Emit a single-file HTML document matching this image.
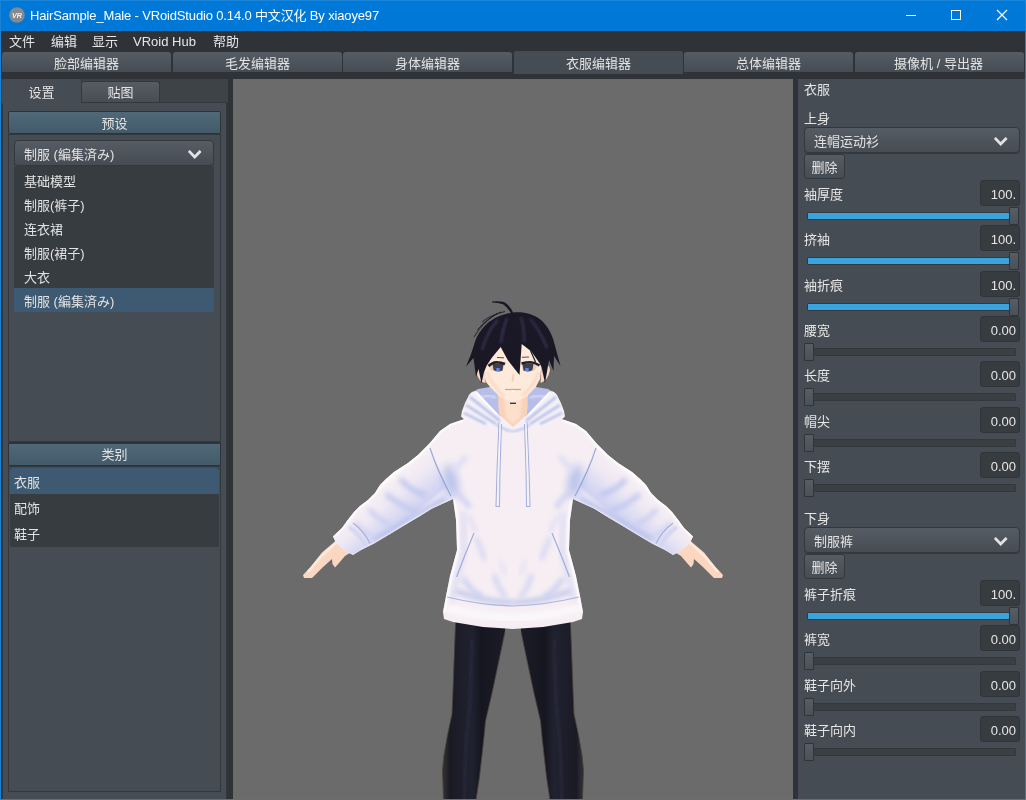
<!DOCTYPE html>
<html lang="zh">
<head>
<meta charset="utf-8">
<title>HairSample_Male - VRoidStudio 0.14.0 中文汉化 By xiaoye97</title>
<style>
*{box-sizing:border-box;margin:0;padding:0}
html,body{width:1026px;height:800px;overflow:hidden;background:#2f3337}
body{position:relative;font-family:"Liberation Sans","Noto Sans CJK SC",sans-serif;font-size:13px;color:#e3e3e3;line-height:1}
.abs{position:absolute}
#win{position:absolute;left:0;top:0;width:1026px;height:800px;overflow:hidden;will-change:transform;-webkit-font-smoothing:antialiased}
#bl,#br,#bb,#bt{position:absolute;background:#1883d7;z-index:50}
#bt{left:0;top:0;width:1026px;height:1px;background:#1a85d9}
#bl{left:0;top:0;width:1px;height:800px}
#br{left:1025px;top:0;width:1px;height:800px}
#bb{left:0;top:799px;width:1026px;height:1px}
#title{position:absolute;left:0;top:0;width:1026px;height:31px;background:#0078d7;color:#fff}
#title .t{position:absolute;left:30px;top:9px;font-size:13px;white-space:nowrap;letter-spacing:-0.15px}
#menu{position:absolute;left:1px;top:31px;width:1024px;height:21px;background:#2f3337}
#menu span{position:absolute;top:4px;font-size:13px;white-space:nowrap;color:#e6e6e6}
.mt{position:absolute;top:52px;height:20px;background:linear-gradient(#565c63,#464c53);border-radius:3px 3px 0 0;text-align:center;font-size:13px;line-height:24px;color:#e3e3e3;white-space:nowrap}
.mt.sel{background:#464c53;top:51px;height:23px;line-height:26px;border-radius:2px 2px 0 0}
#view{position:absolute;left:233px;top:79px;width:560px;height:720px;background:#6b6b6b;overflow:hidden}
/* left */
#lstrip{position:absolute;left:1px;top:79px;width:227px;height:24px;background:#3e4348}
#lpanel{position:absolute;left:2px;top:102px;width:225px;height:698px;background:#464c53;border:1px solid #33383c;border-bottom:none}
.stab{position:absolute;text-align:center;font-size:13px;color:#e3e3e3}
.hdr{position:absolute;height:23px;background:linear-gradient(#4f6978,#435a69);border:1px solid #2e3337;border-radius:2px;text-align:center;font-size:13px;line-height:23px;color:#e3e3e3}
.box{position:absolute;border:1px solid #33383c;background:#464c53}
.dd{position:absolute;height:26px;border:1px solid #33383c;box-shadow:0 1px 0 #363b40;border-radius:4px;background:linear-gradient(#565c63,#464c53);font-size:13px;color:#e3e3e3}
.dd span{position:absolute;left:9px;top:7px;white-space:nowrap}
.dd svg{position:absolute;right:11px;top:9px}
.list{position:absolute;background:#373c41;border-radius:0 0 2px 2px}
.li{position:absolute;left:0;height:24px;font-size:13px;line-height:26px;white-space:nowrap;color:#e3e3e3}
.li.sel{background:#3d5a72}
/* right */
#rpanel{position:absolute;left:798px;top:79px;width:227px;height:720px;background:#464c53}
.lbl{position:absolute;font-size:13px;white-space:nowrap;color:#e6e6e6}
.num{position:absolute;left:980px;width:40px;height:26px;background:#373c41;border:1px solid #30353a;border-radius:3px;font-size:13px;text-align:right;padding:7px 3px 0 0;color:#e6e6e6;white-space:nowrap;overflow:hidden}
.trk{position:absolute;left:807px;width:209px;height:8px;background:#3a3f44;border-radius:1px;border:1px solid #33383c}
.trk.full{background:#38a3dc}
.knob{position:absolute;width:10px;height:18px;background:linear-gradient(#575d64,#4b5158);border:1px solid #2f3438;border-radius:1px}
.btn{position:absolute;width:41px;height:25px;border:1px solid #33383c;border-radius:3px;background:linear-gradient(#565c63,#464c53);font-size:13px;text-align:center;line-height:25px;color:#e3e3e3}
</style>
</head>
<body>
<div id="win">
  <div id="title">
    <svg class="abs" style="left:8px;top:6px" width="18" height="18" viewBox="0 0 18 18"><circle cx="9" cy="9" r="7.8" fill="#858a8f"/><text x="9" y="12" font-size="8" font-weight="bold" font-style="italic" text-anchor="middle" fill="#f4f0f6" font-family="Liberation Sans, sans-serif" textLength="10" lengthAdjust="spacingAndGlyphs">VR</text></svg>
    <div class="t">HairSample_Male - VRoidStudio 0.14.0 中文汉化 By xiaoye97</div>
    <svg class="abs" style="left:900px;top:5px" width="120" height="22" viewBox="0 0 120 22" fill="none" stroke="#fff" stroke-width="1"><path d="M6 10.500H16"/><rect x="51.500" y="5.500" width="9" height="9"/><path d="M97 5L107 15M107 5L97 15" stroke-width="1.2"/></svg>
  </div>
  <div id="menu">
    <span style="left:8px">文件</span><span style="left:50px">编辑</span><span style="left:91px">显示</span><span style="left:132px">VRoid Hub</span><span style="left:212px">帮助</span>
  </div>
  <div class="mt" style="left:2px;width:169px">脸部编辑器</div>
  <div class="mt" style="left:173px;width:169px">毛发编辑器</div>
  <div class="mt" style="left:343px;width:169px">身体编辑器</div>
  <div class="mt sel" style="left:514px;width:169px">衣服编辑器</div>
  <div class="mt" style="left:684px;width:169px">总体编辑器</div>
  <div class="mt" style="left:855px;width:169px;padding-right:2px">摄像机 / 导出器</div>

  <div id="lstrip"></div>
  <div class="stab" style="left:2px;top:79px;width:79px;height:25px;background:#464c53;border-radius:4px 4px 0 0;line-height:28px;z-index:3">设置</div>
  <div class="stab" style="left:81px;top:81px;width:79px;height:22px;background:linear-gradient(#565c63,#464c53);border:1px solid #33383c;border-bottom:none;border-radius:3px 3px 0 0;line-height:22px">贴图</div>
  <div id="lpanel"></div>
  <div class="hdr" style="left:8px;top:111px;width:213px">预设</div>
  <div class="box" style="left:8px;top:134px;width:213px;height:308px"></div>
  <div class="dd" style="left:14px;top:140px;width:200px"><span style="font-family:'Liberation Sans','Noto Sans CJK JP',sans-serif">制服 (編集済み)</span><svg width="14" height="9" viewBox="0 0 14 9"><path d="M0.800 0.900L6.700 6.900L12.600 0.900" fill="none" stroke="#e2e2e4" stroke-width="2.800"/></svg></div>
  <div class="list" style="left:14px;top:167px;width:200px;height:145px">
    <div class="li" style="top:2px;padding-left:10px;width:200px">基础模型</div>
    <div class="li" style="top:26px;padding-left:10px;width:200px">制服(裤子)</div>
    <div class="li" style="top:50px;padding-left:10px;width:200px">连衣裙</div>
    <div class="li" style="top:74px;padding-left:10px;width:200px">制服(裙子)</div>
    <div class="li" style="top:98px;padding-left:10px;width:200px">大衣</div>
    <div class="li sel" style="top:121px;padding-left:10px;width:200px;height:24px;line-height:28px;font-family:'Liberation Sans','Noto Sans CJK JP',sans-serif">制服 (編集済み)</div>
  </div>
  <div class="hdr" style="left:8px;top:442px;width:213px;height:24px;border-top-width:2px;line-height:22px">类别</div>
  <div class="box" style="left:8px;top:466px;width:213px;height:326px"></div>
  <div class="list" style="left:10px;top:468px;width:209px;height:79px">
    <div class="li sel" style="top:0;padding-left:4px;width:209px;height:26px;line-height:29px;border-radius:3px 3px 0 0">衣服</div>
    <div class="li" style="top:27px;padding-left:4px;width:209px;height:26px;line-height:28px">配饰</div>
    <div class="li" style="top:53px;padding-left:4px;width:209px;height:26px;line-height:28px">鞋子</div>
  </div>
  <div id="view">
<svg class="abs" style="left:0;top:0" width="560" height="720" viewBox="233 79 560 720">
<defs>
  <filter id="b1" x="-20%" y="-20%" width="140%" height="140%"><feGaussianBlur stdDeviation="1.2"/></filter>
  <filter id="b2" x="-30%" y="-30%" width="160%" height="160%"><feGaussianBlur stdDeviation="2.5"/></filter>
  <filter id="b4" x="-40%" y="-40%" width="180%" height="180%"><feGaussianBlur stdDeviation="4.5"/></filter>
  <linearGradient id="armg" gradientUnits="userSpaceOnUse" x1="388" y1="475" x2="420" y2="512">
    <stop offset="0" stop-color="#fffdfe"/><stop offset=".15" stop-color="#f6eff4"/><stop offset=".45" stop-color="#eee8f3"/><stop offset=".72" stop-color="#dbdbf3"/><stop offset=".92" stop-color="#d0d3f1"/><stop offset="1" stop-color="#e6e4f5"/>
  </linearGradient>
  <linearGradient id="bodyg" gradientUnits="userSpaceOnUse" x1="445" y1="0" x2="513" y2="0">
    <stop offset="0" stop-color="#fdfbfd"/><stop offset=".1" stop-color="#ece7f4"/><stop offset=".3" stop-color="#f5edf3"/><stop offset="1" stop-color="#f7eff3"/>
  </linearGradient>
  <linearGradient id="legg" gradientUnits="userSpaceOnUse" x1="445" y1="0" x2="505" y2="0">
    <stop offset="0" stop-color="#2e2b31"/><stop offset=".08" stop-color="#1a1a25"/><stop offset=".45" stop-color="#212230"/><stop offset=".6" stop-color="#161620"/><stop offset="1" stop-color="#1c1c28"/>
  </linearGradient>
  <linearGradient id="sking" x1="0" y1="0" x2="0" y2="1"><stop offset="0" stop-color="#fdebd9"/><stop offset="1" stop-color="#fbd9c3"/></linearGradient>
  <clipPath id="hoodclip"><path id="hoodsil" d="M513 416 L470 416 L463 419.500 L450 424 L440 431 L429 444 L418 455 L408 463 L394 472 L386 479 L380 485 L375 493 L368 500 L360 506 L354 512 L347 521 L342 528 L333 536.500 L336 543 L345 551 L353 555 L362 549.500 L374 543.500 L390 534 L404 525.500 L420 516 L432 508.500 L453 499 L456 520 L457 550 L450 576 L446 596 L443 612 L444 619 L453 622 L483 627 L513 629 L543 627 L573 622 L582 619 L583 612 L580 596 L576 576 L569 550 L570 520 L573 499 L594 508.500 L606 516 L622 525.500 L636 534 L652 543.500 L664 549.500 L673 555 L681 551 L690 543 L693 536.500 L684 528 L679 521 L672 512 L666 506 L658 500 L651 493 L646 485 L640 479 L632 472 L618 463 L608 455 L597 444 L586 431 L576 424 L563 419.500 L556 416 L556 416 Z"/></clipPath>
  <g id="half">
    <!-- leg -->
    <path d="M455.500 622 L454 660 L453 690 L452 714 L447.500 735 L444 755 L442.500 770 L443.500 800 L476 800 L479.500 777 L484 737 L485.500 721 L492.500 691 L499 660 L505 631 L506 622 Z" fill="url(#legg)"/>
    <path d="M472 640 L470 700 L466 745 L464 800" fill="none" stroke="#272839" stroke-width="3" filter="url(#b1)"/>
    <path d="M455.500 624 L453 690 L452 714 L447.500 735 L444 755 L442.500 770 L443.500 800" fill="none" stroke="#4a4438" stroke-width="1" opacity=".8"/>
    <path d="M505 632 L492.500 691 L485.500 721 L484 737 L479.500 777 L476 800" fill="none" stroke="#4a4438" stroke-width="1" opacity=".8"/>
    <!-- hand -->
    <path d="M339 538 L322 552.500 L310.500 567 L303 575 L304 578 L312 578 L322.500 567.500 L332 559 L332.500 564 L335 567.500 L339 563 L345 556 L353 551 Z" fill="#fbd6c1"/>
    <path d="M337 542 L322 555.500 L308 572" fill="none" stroke="#fde9db" stroke-width="2.500"/>
  </g>
  <g id="halftop">
    <!-- arm + body shading, clipped to silhouette -->
    <path d="M429 444 L418 455 L408 463 L394 472 L386 479 L380 485 L375 493 L368 500 L360 506 L354 512 L347 521 L342 528 L333 536.500 L336 543 L345 551 L353 555 L362 549.500 L374 543.500 L390 534 L404 525.500 L420 516 L432 508.500 L453 499 L440 470 Z" fill="url(#armg)"/>
    <!-- folds on arm -->
    <path d="M426 495 Q412 492 400 479" fill="none" stroke="#bfc6ed" stroke-width="5" filter="url(#b2)"/>
    <path d="M416 511 Q400 506 386 494" fill="none" stroke="#c3c9ee" stroke-width="5" filter="url(#b2)"/>
    <path d="M390 524 Q378 520 369 509" fill="none" stroke="#c6cbef" stroke-width="4" filter="url(#b2)"/>
    <path d="M372 536 Q362 532 356 522" fill="none" stroke="#cdd0f0" stroke-width="4" filter="url(#b2)"/>
    <path d="M446 499 L420 513 L395 528 L374 540" fill="none" stroke="#bac2ec" stroke-width="5" filter="url(#b2)"/>
    <path d="M452 500 L432 509 L420 516.500 L404 526 L390 534.500 L374 544 L362 550" fill="none" stroke="#fbf9fc" stroke-width="1.600" filter="url(#b1)"/>
    <!-- armpit shadow -->
    <ellipse cx="451" cy="481" rx="7" ry="17" transform="rotate(-12 451 481)" fill="#b9c2ec" filter="url(#b4)"/>
    <path d="M455 492 Q463 497 470 508" fill="none" stroke="#cdd1f1" stroke-width="5" filter="url(#b2)"/>
    <path d="M452 470 Q460 466 466 456" fill="none" stroke="#dcdcf4" stroke-width="5" filter="url(#b2)"/>
    <!-- body side -->
    <path d="M463 512 L464 550 L457 580 L452 600" fill="none" stroke="#e1dff3" stroke-width="6" filter="url(#b2)"/>
    <path d="M454 500 L457 520 L458 550 L451 576 L447 596 L444 612" fill="none" stroke="#fff" stroke-width="2.500" filter="url(#b1)"/>
    <path d="M447 608 Q480 617 513 618" fill="none" stroke="#fbf8fb" stroke-width="8" filter="url(#b2)"/>
    <!-- white rim on top of arm -->
    <path d="M463 419.500 L450 424 L440 431 L429 444 L418 455 L408 463 L394 472 L386 479 L380 485 L375 493 L368 500 L360 506 L354 512 L347 521 L342 528 L333 536.500" fill="none" stroke="#fff" stroke-width="3" filter="url(#b1)"/>
    <!-- shoulder seam -->
    <path d="M430 448 Q437 470 451 496" fill="none" stroke="#95a5d6" stroke-width="1.100"/>
    <!-- cuff -->
    <path d="M349 527 Q360 534 366 547" fill="none" stroke="#d3d6f2" stroke-width="4" filter="url(#b1)"/>
    <path d="M353 523 Q364 531 370 543.500" fill="none" stroke="#a3b0de" stroke-width="1.200"/>
    <!-- body shading -->
    <path d="M456 591 Q485 602 513 602.500" fill="none" stroke="#c0c8ed" stroke-width="5" filter="url(#b2)"/>
    <path d="M463 578 Q470 590 482 597" fill="none" stroke="#cbd0f0" stroke-width="5" filter="url(#b2)"/>
    <path d="M494 574 Q498 588 506 598" fill="none" stroke="#d5d7f2" stroke-width="5" filter="url(#b2)"/>
    <path d="M476 537 L485 560" fill="none" stroke="#dad9f2" stroke-width="5" filter="url(#b2)"/>
    <path d="M468 515 L476 532" fill="none" stroke="#e0def4" stroke-width="4" filter="url(#b2)"/>
    <path d="M500 560 L506 575" fill="none" stroke="#e6e2f3" stroke-width="4" filter="url(#b2)"/>
    <!-- pocket line -->
    <path d="M474 533 L465 555 L456.500 577" fill="none" stroke="#9fadde" stroke-width="1.200"/>
    <!-- hem seam -->
    <path d="M447 597 Q480 605 513 606" fill="none" stroke="#a9b6e0" stroke-width="1.2"/>
  </g>
  <g id="dstr">
    <!-- drawstring -->
    <path d="M499 422 L497 470 L496 506 M501.500 424 L500 470 L499.500 506 M495.500 506.500 L500 506.500" fill="none" stroke="#a3b0df" stroke-width="1"/>
    <path d="M500.200 423 L498.500 470 L497.800 505" fill="none" stroke="#f4f2fb" stroke-width="1.2"/>
  </g>
</defs>
<!-- legs & hands -->
<use href="#half"/><use href="#half" transform="translate(1026 0) scale(-1 1)"/>
<!-- hoodie -->
<use href="#hoodsil" fill="#f6eef3"/>
<g clip-path="url(#hoodclip)">
  <use href="#halftop"/><use href="#halftop" transform="translate(1026 0) scale(-1 1)"/>
</g>
<!-- hood -->
<g id="hoodh">
  <path d="M473 392 L478 389 L490 387 L497 387 L501 418 L497 416 Z" fill="#b7bfe8"/>
  <path d="M479 398 Q487 393 496 398" fill="none" stroke="#d3d7f2" stroke-width="3" filter="url(#b1)"/>
  <path d="M477 391.500 L498 414 L513 427 L513 433 L490 428 L466 421 L461 416.500 L462 411 Q465 402 469 395 Q472 390 477 391.500 Z" fill="#f5f0f6"/>
  <path d="M470 397 L500 421 M466 405 L496 424 M464 413 L486 424" fill="none" stroke="#b4beea" stroke-width="2.4" filter="url(#b1)"/>
  <path d="M476 392.500 L497 414.500" fill="none" stroke="#fff" stroke-width="1.5"/>
</g>
<use href="#hoodh" transform="translate(1026 0) scale(-1 1)"/>
<path d="M496 424.500 Q505 430.500 513 431.500 Q521 430.500 530 424.500" fill="none" stroke="#b4bfe9" stroke-width="1.600" filter="url(#b1)"/>
<use href="#dstr"/><use href="#dstr" transform="translate(1026 0) scale(-1 1)"/>
<!-- neck -->
<path d="M498 395 L498.500 408 L499.500 415 L513 427 L526.500 415 L527.500 408 L528 395 Z" fill="#fad2ba"/>
<path d="M504 400 L506 417 L513 424 L520 417 L522 400 Z" fill="#fde0cc" filter="url(#b1)"/>
<!-- face -->
<path d="M486 346 L484.500 366 L484.500 376 L486 382 L490.500 387.500 L499 396 L507 400.500 L513 402 L519 400.500 L526 397 L535.500 387.500 L540 379 L541.500 366 L540 346 L513 338 Z" fill="#fdeadb"/>
<path d="M487 372 Q492 386 504 396" fill="none" stroke="#fbd9c6" stroke-width="3" filter="url(#b1)"/>
<path d="M539 372 Q534 386 522 396" fill="none" stroke="#fbd9c6" stroke-width="3" filter="url(#b1)"/>
<!-- ears -->
<path d="M484.500 368 Q477 365 476.500 372 Q478 382 485.500 383 Z" fill="#fbd8c4"/>
<path d="M541.500 365 Q549 362 550 370 Q548 381 540.500 383 Z" fill="#fbd8c4"/>
<path d="M510 403.300 L516 403.300" stroke="#40282a" stroke-width="1.300"/>
<!-- mouth -->
<path d="M505 389.500 L521 389.500" stroke="#e79a74" stroke-width="1.200"/>
<path d="M512 391 L514 391" stroke="#fff" stroke-width="1"/>
<!-- nose -->
<path d="M513.500 375 L512.500 381" stroke="#f6cdb8" stroke-width="1.800" stroke-linecap="round"/>
<!-- eyes -->
<g>
  <path d="M488.500 366 L491 370 Q496 373 503 370.500 L504.500 364 L496 362.500 Z" fill="#f1cdb9"/>
  <path d="M492.500 364 L503.500 364 L502.500 370.500 Q497 372.500 493.500 370 Z" fill="#3f3f4d"/>
  <rect x="496.300" y="368" width="3.400" height="3" fill="#5d84ea"/>
  <path d="M488.500 366 Q492 362.500 496.500 362.300 Q501 362.300 505 364" fill="none" stroke="#22202b" stroke-width="2.600"/>
  <path d="M537.500 366 L535 370 Q530 373 523 370.500 L521.500 364 L530 362.500 Z" fill="#f1cdb9"/>
  <path d="M533.500 364 L522.500 364 L523.500 370.500 Q529 372.500 532.500 370 Z" fill="#3f3f4d"/>
  <rect x="525.300" y="368" width="3.400" height="3" fill="#5d84ea"/>
  <path d="M539.500 365.500 Q535 362.500 530.500 362.300 Q526 362.300 521.500 363.500" fill="none" stroke="#22202b" stroke-width="2.600"/>
  <path d="M497 357.500 L504 357.800 M522 357.300 L529 357" stroke="#5b4c58" stroke-width="1"/>
</g>
<!-- hair -->
<path d="M513 312.500 C520 311.500 530 312.500 537.500 317.500 C546 323 552 333 554.500 344 L560.500 366 L554 356 L553.500 371 L549 360 L545 383 L541.500 367 L539.300 362.800 L531.400 351.400 L521.700 344 L519.500 375 L507.700 360 L500.700 347 L492 357.500 L486.700 365.400 L484 372 L481.500 383.500 L478.500 369 L476 377 L473.500 358 L466 366.500 L470.700 355 L474 345 C476 337 480 331 484.700 326 C490 320.500 497 316.500 503 314.800 C507 313.500 510 313 513 312.500 Z" fill="#1b1826"/>
<path d="M530.500 350.500 L535.500 362" stroke="#1b1826" stroke-width="1.200"/>
<path d="M492 301.500 Q499 300.800 504 302 Q510 305 513.500 313.500 L511 313.500 Q507.500 307 503 304.300 Q498 302.500 492 302.500 Z" fill="#1b1826"/>
<path d="M474 337 Q482 323 497 313.500 M477.500 330 Q486 318.500 501 312 M482 322 Q491 314.500 505 311.500" fill="none" stroke="#1b1826" stroke-width="1" opacity=".85"/>
<path d="M498 320 Q488 330 482 350 M507 318 Q502 332 501 343 M530 319 Q540 330 547 348 M521 317 Q525 330 524 342" fill="none" stroke="#332d49" stroke-width="2.500" filter="url(#b1)"/>
</svg>
</div>
  <div id="rpanel"></div>
  <div class="lbl" style="left:804px;top:83px">衣服</div>
  <div class="lbl" style="left:804px;top:112px">上身</div>
  <div class="dd" style="left:804px;top:127px;width:216px"><span>连帽运动衫</span><svg width="14" height="9" viewBox="0 0 14 9"><path d="M0.800 0.900L6.700 6.900L12.600 0.900" fill="none" stroke="#e2e2e4" stroke-width="2.800"/></svg></div>
  <div class="btn" style="left:804px;top:154px">删除</div>
  <div class="lbl" style="left:804px;top:188px">袖厚度</div>
  <div class="num" style="top:180px">100.</div>
  <div class="trk full" style="top:212px"></div>
  <div class="knob" style="left:1009px;top:207px"></div>
  <div class="lbl" style="left:804px;top:233px">挤袖</div>
  <div class="num" style="top:225px">100.</div>
  <div class="trk full" style="top:257px"></div>
  <div class="knob" style="left:1009px;top:252px"></div>
  <div class="lbl" style="left:804px;top:279px">袖折痕</div>
  <div class="num" style="top:271px">100.</div>
  <div class="trk full" style="top:303px"></div>
  <div class="knob" style="left:1009px;top:298px"></div>
  <div class="lbl" style="left:804px;top:324px">腰宽</div>
  <div class="num" style="top:316px">0.00</div>
  <div class="trk" style="top:348px"></div>
  <div class="knob" style="left:804px;top:343px"></div>
  <div class="lbl" style="left:804px;top:369px">长度</div>
  <div class="num" style="top:361px">0.00</div>
  <div class="trk" style="top:393px"></div>
  <div class="knob" style="left:804px;top:388px"></div>
  <div class="lbl" style="left:804px;top:415px">帽尖</div>
  <div class="num" style="top:407px">0.00</div>
  <div class="trk" style="top:439px"></div>
  <div class="knob" style="left:804px;top:434px"></div>
  <div class="lbl" style="left:804px;top:460px">下摆</div>
  <div class="num" style="top:452px">0.00</div>
  <div class="trk" style="top:484px"></div>
  <div class="knob" style="left:804px;top:479px"></div>
  <div class="lbl" style="left:804px;top:512px">下身</div>
  <div class="dd" style="left:804px;top:527px;width:216px"><span>制服裤</span><svg width="14" height="9" viewBox="0 0 14 9"><path d="M0.800 0.900L6.700 6.900L12.600 0.900" fill="none" stroke="#e2e2e4" stroke-width="2.800"/></svg></div>
  <div class="btn" style="left:804px;top:554px">删除</div>
  <div class="lbl" style="left:804px;top:588px">裤子折痕</div>
  <div class="num" style="top:580px">100.</div>
  <div class="trk full" style="top:612px"></div>
  <div class="knob" style="left:1009px;top:607px"></div>
  <div class="lbl" style="left:804px;top:633px">裤宽</div>
  <div class="num" style="top:625px">0.00</div>
  <div class="trk" style="top:657px"></div>
  <div class="knob" style="left:804px;top:652px"></div>
  <div class="lbl" style="left:804px;top:679px">鞋子向外</div>
  <div class="num" style="top:671px">0.00</div>
  <div class="trk" style="top:703px"></div>
  <div class="knob" style="left:804px;top:698px"></div>
  <div class="lbl" style="left:804px;top:724px">鞋子向内</div>
  <div class="num" style="top:716px">0.00</div>
  <div class="trk" style="top:748px"></div>
  <div class="knob" style="left:804px;top:743px"></div>
  <div id="bt"></div><div id="bl"></div><div id="br"></div><div id="bb"></div>
</div>
</body>
</html>
